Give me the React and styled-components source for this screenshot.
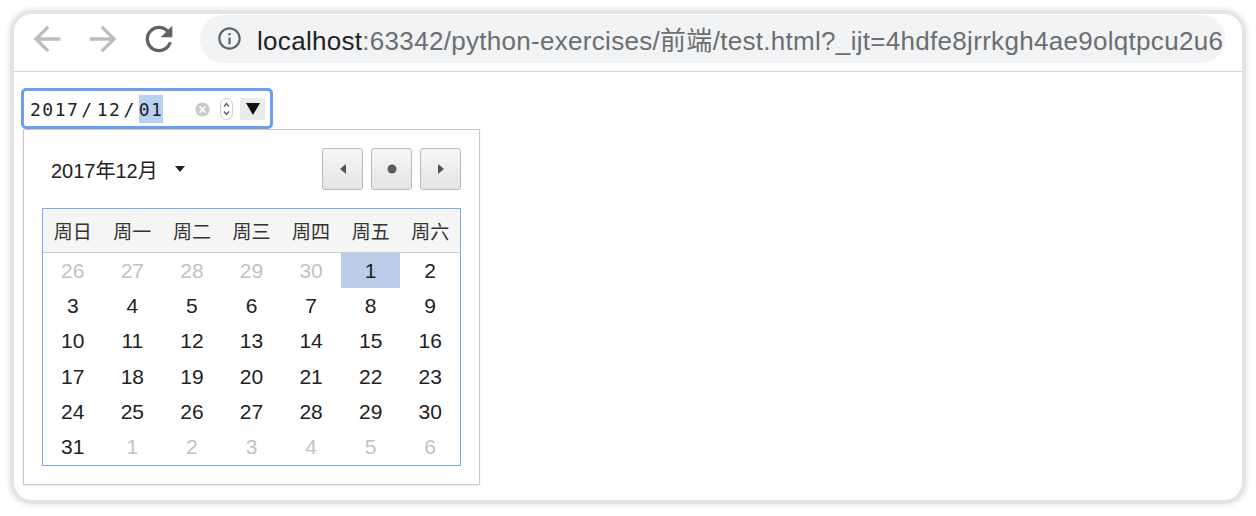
import styled, { createGlobalStyle } from "styled-components";

const GlobalStyle = createGlobalStyle`
  html, body {
    margin: 0;
    padding: 0;
    background: #ffffff;
  }
  body {
    font-family: "Liberation Sans", Arial, sans-serif;
  }
`;

const Page = styled.div`
  width: 1256px;
  height: 516px;
  box-sizing: border-box;
  padding: 10px;
`;

const Window = styled.div`
  width: 1236px;
  height: 494px;
  box-sizing: border-box;
  border: 4px solid #e4e4e4;
  border-radius: 22px;
  box-shadow: 0 0 3px 3px #f2f2f2;
  overflow: hidden;
  display: flex;
  flex-direction: column;
  background: #fff;
`;

const Toolbar = styled.div`
  height: 58px;
  box-sizing: border-box;
  border-bottom: 1px solid #d5d5d5;
  display: flex;
  align-items: center;
  gap: 16px;
  padding: 1px 17px 9px 13px;
`;

const NavIcon = styled.svg`
  width: 40px;
  height: 40px;
  flex-shrink: 0;
  fill: ${(p) => (p.$disabled ? "#bcbcbc" : "#5f6368")};
`;

const Omnibox = styled.div`
  flex: 1;
  height: 48px;
  margin-left: 5px;
  border-radius: 24px;
  background: #f1f3f4;
  display: flex;
  align-items: center;
  padding-left: 16px;
  gap: 14px;
  overflow: hidden;
  white-space: nowrap;
`;

const InfoIcon = styled.svg`
  width: 27px;
  height: 27px;
  flex-shrink: 0;
  fill: #5f6368;
`;

const Url = styled.div`
  font-family: "Liberation Sans", Arial, "Noto Sans CJK SC", sans-serif;
  font-size: 26px;
  letter-spacing: 0.3px;
  color: #6b6e72;
`;

const Host = styled.span`
  color: #202124;
`;

const Content = styled.div`
  flex: 1;
  padding: 16px 7px;
`;

const DatePicker = styled.div`
  display: flex;
  flex-direction: column;
  align-items: flex-start;
`;

const DateInput = styled.div`
  width: 252px;
  height: 41px;
  box-sizing: border-box;
  border: 3px solid #6d9ef4;
  border-radius: 5px;
  display: flex;
  align-items: center;
  padding: 1px 5px 0 6px;
  font-family: "DejaVu Sans Mono", monospace;
  font-size: 18px;
  letter-spacing: 1.5px;
  color: #222;
`;

const Field = styled.span`
  display: inline-flex;
  align-items: center;
  height: 28px;
  background: ${(p) => (p.$active ? "#b8d0f4" : "transparent")};
`;

const Sep = styled.span`
  margin: 0 3px 0 2px;
`;

const Spacer = styled.div`
  flex: 1;
`;

const ClearIcon = styled.svg`
  width: 15px;
  height: 15px;
  flex-shrink: 0;
`;

const Spinner = styled.svg`
  width: 13px;
  height: 22px;
  margin-left: 10px;
  flex-shrink: 0;
`;

const DropButton = styled.div`
  width: 25px;
  height: 22px;
  margin-left: 7px;
  background: #ebebeb;
  display: flex;
  align-items: center;
  justify-content: center;
`;

const Popup = styled.div`
  margin-left: 2px;
  width: 457px;
  box-sizing: border-box;
  border: 1px solid #c8c8c8;
  box-shadow: 0 1px 2px rgba(0, 0, 0, 0.08);
  padding: 18px;
  background: #fff;
`;

const PopupHeader = styled.div`
  display: flex;
  align-items: center;
  justify-content: space-between;
  height: 42px;
`;

const MonthLabel = styled.div`
  display: flex;
  align-items: center;
  gap: 17px;
  padding-left: 9px;
  font-family: "Liberation Sans", "Noto Sans CJK SC", sans-serif;
  font-size: 20px;
  color: #222;
`;

const NavGroup = styled.div`
  display: flex;
  gap: 8px;
`;

const NavButton = styled.div`
  width: 41px;
  height: 42px;
  box-sizing: border-box;
  border: 1px solid #b9b9b9;
  border-radius: 3px;
  background: linear-gradient(#f7f7f7, #e4e4e4);
  display: flex;
  align-items: center;
  justify-content: center;
`;

const Calendar = styled.div`
  margin-top: 18px;
  border: 1px solid #7eaaf3;
`;

const WeekHeader = styled.div`
  display: grid;
  grid-template-columns: repeat(7, 1fr);
  height: 44px;
  box-sizing: border-box;
  background: #f5f5f5;
  border-bottom: 1px solid #cfcfcf;
`;

const WeekDay = styled.div`
  display: flex;
  align-items: center;
  justify-content: center;
  font-family: "Noto Sans CJK SC", sans-serif;
  font-size: 19px;
  color: #333;
`;

const Days = styled.div`
  display: grid;
  grid-template-columns: repeat(7, 1fr);
  grid-auto-rows: 35.33px;
`;

const Day = styled.div`
  display: flex;
  align-items: center;
  justify-content: center;
  font-family: "Liberation Sans", Arial, sans-serif;
  font-size: 21px;
  color: ${(p) => (p.$muted ? "#c2c2c2" : "#222")};
  background: ${(p) => (p.$selected ? "#bccdea" : "transparent")};
`;

const weekDays = ["周日", "周一", "周二", "周三", "周四", "周五", "周六"];

const days = [
  ...[26, 27, 28, 29, 30].map((d) => ({ d, muted: true })),
  ...Array.from({ length: 31 }, (_, i) => ({ d: i + 1, selected: i === 0 })),
  ...[1, 2, 3, 4, 5, 6].map((d) => ({ d, muted: true })),
];

const App = () => {
  return (
    <>
      <GlobalStyle />
      <Page>
        <Window>
          <Toolbar>
            <NavIcon viewBox="0 0 24 24" $disabled>
              <path d="M20 11H7.83l5.59-5.59L12 4l-8 8 8 8 1.41-1.41L7.83 13H20v-2z" />
            </NavIcon>
            <NavIcon viewBox="0 0 24 24" $disabled>
              <path d="M4 11h12.17l-5.59-5.59L12 4l8 8-8 8-1.41-1.41L16.17 13H4v-2z" />
            </NavIcon>
            <NavIcon viewBox="0 0 24 24">
              <path d="M17.65 6.35C16.2 4.9 14.21 4 12 4c-4.42 0-7.99 3.58-7.99 8s3.57 8 7.99 8c3.73 0 6.84-2.55 7.73-6h-2.08c-.82 2.33-3.04 4-5.65 4-3.31 0-6-2.69-6-6s2.69-6 6-6c1.66 0 3.14.69 4.22 1.78L13 11h7V4l-2.35 2.35z" />
            </NavIcon>
            <Omnibox>
              <InfoIcon viewBox="0 0 24 24">
                <path d="M11 7h2v2h-2zm0 4h2v6h-2zm1-9C6.48 2 2 6.48 2 12s4.48 10 10 10 10-4.48 10-10S17.52 2 12 2zm0 18c-4.41 0-8-3.59-8-8s3.59-8 8-8 8 3.59 8 8-3.59 8-8 8z" />
              </InfoIcon>
              <Url>
                <Host>localhost</Host>:63342/python-exercises/前端/test.html?_ijt=4hdfe8jrrkgh4ae9olqtpcu2u6
              </Url>
            </Omnibox>
          </Toolbar>
          <Content>
            <DatePicker>
              <DateInput>
                <Field>2017</Field>
                <Sep>/</Sep>
                <Field>12</Field>
                <Sep>/</Sep>
                <Field $active>01</Field>
                <Spacer />
                <ClearIcon viewBox="0 0 16 16">
                  <circle cx="8" cy="8" r="7.5" fill="#c9c9c9" />
                  <path d="M5.3 5.3l5.4 5.4M10.7 5.3l-5.4 5.4" stroke="#fff" strokeWidth="1.8" strokeLinecap="round" />
                </ClearIcon>
                <Spinner viewBox="0 0 13 22">
                  <rect x="0.5" y="0.5" width="12" height="21" rx="6" fill="#fff" stroke="#cdcdcd" />
                  <path d="M4 8.5l2.5-3 2.5 3M4 13.5l2.5 3 2.5-3" fill="none" stroke="#555" strokeWidth="1.2" />
                </Spinner>
                <DropButton>
                  <svg width="14" height="12" viewBox="0 0 14 12">
                    <polygon points="0,0 14,0 7,12" fill="#111" />
                  </svg>
                </DropButton>
              </DateInput>
              <Popup>
                <PopupHeader>
                  <MonthLabel>
                    2017年12月
                    <svg width="10" height="6" viewBox="0 0 10 6">
                      <polygon points="0,0 10,0 5,6" fill="#222" />
                    </svg>
                  </MonthLabel>
                  <NavGroup>
                    <NavButton>
                      <svg width="6" height="10" viewBox="0 0 6 10">
                        <polygon points="6,0 6,10 0,5" fill="#555" />
                      </svg>
                    </NavButton>
                    <NavButton>
                      <svg width="10" height="10" viewBox="0 0 10 10">
                        <circle cx="5" cy="5" r="4.5" fill="#5e5e5e" />
                      </svg>
                    </NavButton>
                    <NavButton>
                      <svg width="6" height="10" viewBox="0 0 6 10">
                        <polygon points="0,0 0,10 6,5" fill="#555" />
                      </svg>
                    </NavButton>
                  </NavGroup>
                </PopupHeader>
                <Calendar>
                  <WeekHeader>
                    {weekDays.map((w) => (
                      <WeekDay key={w}>{w}</WeekDay>
                    ))}
                  </WeekHeader>
                  <Days>
                    {days.map((item, i) => (
                      <Day key={i} $muted={item.muted} $selected={item.selected}>
                        {item.d}
                      </Day>
                    ))}
                  </Days>
                </Calendar>
              </Popup>
            </DatePicker>
          </Content>
        </Window>
      </Page>
    </>
  );
};

export default App;
